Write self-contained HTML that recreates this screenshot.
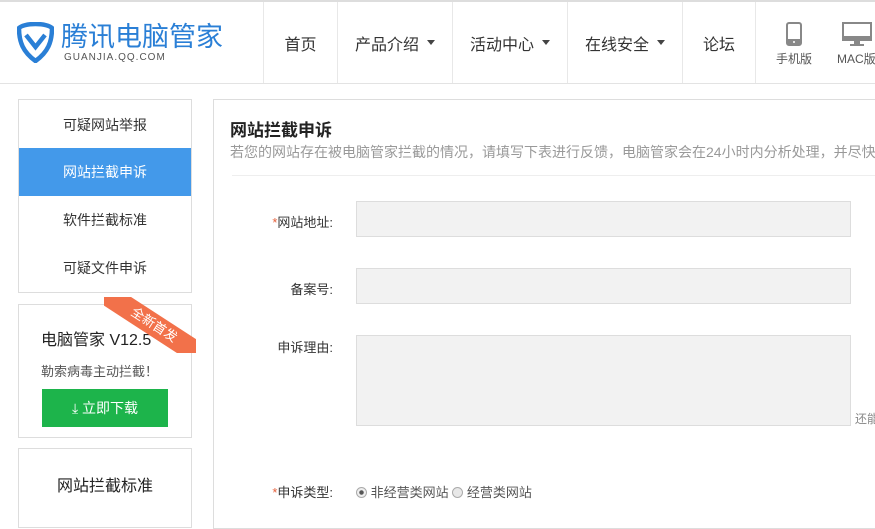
<!DOCTYPE html>
<html><head><meta charset="utf-8"><style>
*{margin:0;padding:0;box-sizing:border-box}
body{width:875px;height:510px;overflow:hidden;background:#fff;font-family:"Liberation Sans","Noto Sans CJK SC",sans-serif;color:#333;position:relative}
.abs{position:absolute}
.hdr{left:0;top:0;width:875px;height:84px;border-top:2px solid #ddd;border-bottom:1px solid #e3e3e3;background:#fff}
.nav{top:2px;height:81px;font-size:16px;color:#333;display:flex;align-items:center;justify-content:center;border-left:1px solid #e8e8e8}
.car{display:inline-block;width:0;height:0;border-left:4px solid transparent;border-right:4px solid transparent;border-top:5px solid #444;margin-left:8px;vertical-align:middle}
.box{border:1px solid #ddd;background:#fff}
.mi{position:absolute;left:0;width:172px;height:48px;line-height:48px;text-align:center;font-size:14px;color:#333}
.lbl{position:absolute;font-size:13px;color:#333;text-align:right;width:120px;left:213px}
.inp{position:absolute;left:356px;width:495px;background:#f2f2f2;border:1px solid #ddd}
</style></head><body>
<div class="abs hdr"></div>
<svg class="abs" style="left:17px;top:22px" width="37" height="41" viewBox="0 0 37 41"><path d="M18.5 2 C10 2 4 4 2 6 C2 20 6 30 18.5 39 C31 30 35 20 35 6 C33 4 27 2 18.5 2Z" fill="none" stroke="#2a7fd6" stroke-width="4.5" stroke-linejoin="round"/><path d="M9 13 L18.5 25 L28 13" fill="none" stroke="#2a7fd6" stroke-width="4.5"/></svg>
<div class="abs" style="left:61px;top:21px;font-size:27px;color:#2a7fd6;line-height:32px">腾讯电脑管家</div>
<div class="abs" style="left:64px;top:52px;font-size:10px;color:#555;letter-spacing:1px">GUANJIA.QQ.COM</div>
<div class="abs nav" style="left:263px;width:74px">首页</div>
<div class="abs nav" style="left:337px;width:115px">产品介绍<span class="car"></span></div>
<div class="abs nav" style="left:452px;width:115px">活动中心<span class="car"></span></div>
<div class="abs nav" style="left:567px;width:115px">在线安全<span class="car"></span></div>
<div class="abs nav" style="left:682px;width:73px">论坛</div>
<div class="abs nav" style="left:755px;width:120px"></div>
<svg class="abs" style="left:786px;top:22px" width="16" height="24"><rect x="1" y="1" width="14" height="22" rx="2" fill="none" stroke="#888" stroke-width="2"/><rect x="1" y="17" width="14" height="6" fill="#888"/><circle cx="8" cy="20" r="1" fill="#fff"/></svg>
<div class="abs" style="left:776px;top:50px;font-size:12px;color:#555">手机版</div>
<svg class="abs" style="left:842px;top:22px" width="30" height="25"><rect x="1" y="1" width="28" height="17" fill="none" stroke="#888" stroke-width="2"/><rect x="1" y="14" width="28" height="4" fill="#888"/><rect x="12" y="18" width="6" height="4" fill="#888"/><rect x="8" y="22" width="14" height="2" fill="#888"/></svg>
<div class="abs" style="left:837px;top:50px;font-size:12px;color:#555;white-space:nowrap">MAC版</div>

<div class="abs box" style="left:18px;top:99px;width:174px;height:194px">
<div class="mi" style="top:1px">可疑网站举报</div>
<div class="mi" style="top:48px;background:#4399ea;color:#fff">网站拦截申诉</div>
<div class="mi" style="top:96px">软件拦截标准</div>
<div class="mi" style="top:144px">可疑文件申诉</div>
</div>
<div class="abs box" style="left:18px;top:304px;width:174px;height:134px">
<div class="abs" style="left:22px;top:21px;font-size:16px;color:#222">电脑管家 V12.5</div>
<div class="abs" style="left:22px;top:56px;font-size:13px;color:#555">勒索病毒主动拦截！</div>
<div class="abs" style="left:23px;top:84px;width:126px;height:38px;background:#1db44b;color:#fff;font-size:14px;text-align:center;line-height:38px">⤓ 立即下载</div>
</div>
<div class="abs" style="left:104px;top:297px;width:92px;height:56px;overflow:hidden">
<div class="abs" style="left:-10px;top:17px;width:120px;height:22px;background:#f2714a;transform:rotate(33deg);color:#fff;font-size:13px;text-align:center;line-height:22px">全新首发</div>
</div>
<div class="abs box" style="left:18px;top:448px;width:174px;height:80px">
<div class="abs" style="left:0;width:172px;top:23px;font-size:16px;color:#222;text-align:center">网站拦截标准</div>
</div>

<div class="abs box" style="left:213px;top:99px;width:680px;height:430px;border-right:none"></div>
<div class="abs" style="left:230px;top:116px;font-size:17px;font-weight:bold;color:#222">网站拦截申诉</div>
<div class="abs" style="left:230px;top:142px;font-size:14px;color:#999;white-space:nowrap">若您的网站存在被电脑管家拦截的情况，请填写下表进行反馈，电脑管家会在24小时内分析处理，并尽快</div>
<div class="abs" style="left:232px;top:175px;width:643px;height:1px;background:#eee"></div>
<div class="lbl" style="top:212px"><span style="color:#e5603b">*</span>网站地址:</div>
<div class="inp" style="top:201px;height:36px"></div>
<div class="lbl" style="top:279px">备案号:</div>
<div class="inp" style="top:268px;height:36px"></div>
<div class="lbl" style="top:337px">申诉理由:</div>
<div class="inp" style="top:335px;height:91px"></div>
<div class="abs" style="left:855px;top:410px;font-size:12px;color:#888;white-space:nowrap">还能</div>
<div class="lbl" style="top:482px"><span style="color:#e5603b">*</span>申诉类型:</div>
<div class="abs" style="left:356px;top:482px;font-size:13px;color:#555;white-space:nowrap"><span style="display:inline-block;width:11px;height:11px;border:1px solid #aaa;border-radius:50%;vertical-align:-1px;background:radial-gradient(#555 30%,#eee 40%)"></span> 非经营类网站 <span style="display:inline-block;width:11px;height:11px;border:1px solid #aaa;border-radius:50%;vertical-align:-1px;background:#e8e8e8"></span> 经营类网站</div>
</body></html>
